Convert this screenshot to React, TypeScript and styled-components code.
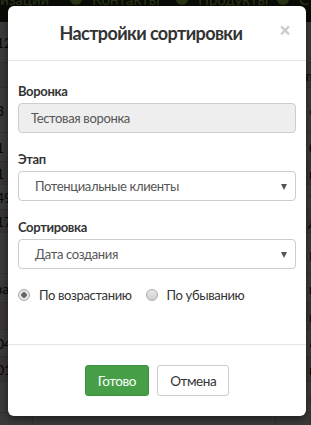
import React from "react";
import styled, { createGlobalStyle } from "styled-components";

const Global = createGlobalStyle`
  html, body { margin: 0; padding: 0; }
  body {
    width: 311px;
    height: 425px;
    overflow: hidden;
    font-family: Lato, "Open Sans", "Liberation Sans", sans-serif;
    background: #f0f0f0;
  }
`;

const Page = styled.div`
  position: relative;
  width: 311px;
  height: 425px;
  overflow: hidden;
  background: #f2f2f2;
`;

const TopNav = styled.div`
  height: 22px;
  background: #2a3320;
  display: flex;
  align-items: flex-start;
  white-space: nowrap;
  overflow: hidden;
`;

const NavItem = styled.div<{ $w: number }>`
  flex: 0 0 ${(p) => p.$w}px;
  display: flex;
  align-items: center;
  gap: 10px;
  margin-top: -10px;
  font-size: 15px;
  line-height: 18px;
  color: #a8dc5e;
`;

const NavDot = styled.span`
  width: 12px;
  height: 12px;
  border-radius: 50%;
  background: #a8dc5e;
`;

const Table = styled.div`
  display: flex;
  flex-direction: column;
`;

const Row = styled.div<{ $h: number; $tone?: "pink" | "grey" }>`
  height: ${(p) => p.$h}px;
  display: flex;
  align-items: center;
  justify-content: space-between;
  border-bottom: 1px solid #cfcfcf;
  background: ${(p) => (p.$tone === "pink" ? "#f2dede" : p.$tone === "grey" ? "#e4e4e4" : "#f4f4f4")};
  font-size: 14px;
  color: #222;
  white-space: nowrap;
`;

const CellLeft = styled.span`
  margin-left: -4px;
`;

const CellRight = styled.span`
  margin-right: -6px;
`;

const BottomStrip = styled.div`
  flex: 1;
  display: grid;
  grid-template-columns: 33px 1fr 35px;
  min-height: 40px;
`;

const StripCell = styled.div`
  border-right: 1px solid #cfcfcf;
  background: #f4f4f4;
`;

const Overlay = styled.div`
  position: absolute;
  inset: 0;
  background: rgba(0, 0, 0, 0.76);
`;

const Modal = styled.div`
  position: absolute;
  left: 8px;
  top: 6px;
  width: 298px;
  height: 410px;
  box-sizing: border-box;
  background: #fff;
  border-radius: 6px;
  box-shadow: 0 3px 9px rgba(0, 0, 0, 0.5);
  display: flex;
  flex-direction: column;
  font-family: Lato, "Open Sans", "Liberation Sans", sans-serif;
  letter-spacing: -0.35px;
`;

const Header = styled.div`
  display: flex;
  align-items: flex-start;
  padding: 15px;
  border-bottom: 1px solid #e5e5e5;
`;

const Title = styled.h4`
  flex: 1;
  margin: 0;
  text-align: center;
  font-size: 18px;
  font-weight: 700;
  line-height: 24px;
  letter-spacing: -0.6px;
  color: #333;
`;

const Close = styled.button`
  margin-top: -1px;
  padding: 0;
  border: 0;
  background: transparent;
  font-family: "Open Sans", "Liberation Sans", sans-serif;
  font-size: 21px;
  font-weight: 700;
  line-height: 1;
  color: #000;
  opacity: 0.2;
`;

const Body = styled.div`
  flex: 1;
  padding: 21px 10px 0;
`;

const Group = styled.div`
  margin-bottom: 17px;
`;

const Label = styled.div`
  font-size: 13px;
  font-weight: 700;
  line-height: 18px;
  margin-bottom: 3px;
  color: #333;
`;

const Field = styled.div<{ $disabled?: boolean; $pad: number }>`
  position: relative;
  height: 30px;
  box-sizing: border-box;
  display: flex;
  align-items: center;
  padding: 0 24px 0 ${(p) => p.$pad}px;
  border: 1px solid #ccc;
  border-radius: 4px;
  background: ${(p) => (p.$disabled ? "#eee" : "#fff")};
  font-size: 13px;
  color: #555;
`;

const Arrow = styled.span`
  position: absolute;
  right: 8px;
  top: 12px;
  width: 0;
  height: 0;
  border-left: 3.5px solid transparent;
  border-right: 3.5px solid transparent;
  border-top: 6px solid #555;
`;

const Radios = styled.div`
  display: flex;
  align-items: center;
  gap: 14px;
  margin-top: 5px;
  font-size: 13px;
  line-height: 18px;
  color: #333;
`;

const RadioLabel = styled.label`
  display: flex;
  align-items: center;
  gap: 9px;
`;

const RadioCircle = styled.span<{ $checked?: boolean }>`
  width: 12px;
  height: 12px;
  box-sizing: border-box;
  border-radius: 50%;
  border: 1px solid #aaa;
  background: ${(p) =>
    p.$checked
      ? "radial-gradient(circle, #666 0 2.5px, #e6e6e6 3px)"
      : "linear-gradient(#e8e8e8, #cfcfcf)"};
`;

const Footer = styled.div`
  border-top: 1px solid #e5e5e5;
  padding: 20px 15px;
  display: flex;
  justify-content: center;
  gap: 8px;
`;

const Button = styled.button<{ $primary?: boolean }>`
  height: 31px;
  padding: 0 12px;
  border-radius: 3px;
  font-family: Lato, "Open Sans", "Liberation Sans", sans-serif;
  font-size: 13.5px;
  letter-spacing: -0.4px;
  border: 1px solid ${(p) => (p.$primary ? "#3f8f40" : "#ccc")};
  background: ${(p) => (p.$primary ? "#469f47" : "#fff")};
  color: ${(p) => (p.$primary ? "#fff" : "#333")};
`;

const rows: { h: number; l: string; r: string; tone?: "pink" | "grey" }[] = [
  { h: 40, l: "12", r: "" },
  { h: 24, l: "", r: "m", tone: "grey" },
  { h: 44, l: "3 –", r: "e" },
  { h: 28, l: "1", r: "б" },
  { h: 22, l: "1", r: "н", tone: "pink" },
  { h: 24, l: "49", r: "т" },
  { h: 22, l: "17", r: "д", tone: "pink" },
  { h: 40, l: "", r: "р" },
  { h: 28, l: "за", r: "п" },
  { h: 26, l: "", r: "н", tone: "pink" },
  { h: 26, l: "04", r: "е" },
  { h: 24, l: "01", r: "н", tone: "pink" },
  { h: 30, l: "", r: "к" },
];

export default function App() {
  return (
    <>
      <Global />
      <Page>
        <TopNav>
          <NavItem $w={70}>изации</NavItem>
          <NavItem $w={106}>
            <NavDot />
            Контакты
          </NavItem>
          <NavItem $w={101}>
            <NavDot />
            Продукты
          </NavItem>
          <NavItem $w={40}>
            <NavDot />С
          </NavItem>
        </TopNav>
        <Table>
          {rows.map((r, i) => (
            <Row key={i} $h={r.h} $tone={r.tone}>
              <CellLeft>{r.l}</CellLeft>
              <CellRight>{r.r}</CellRight>
            </Row>
          ))}
        </Table>
        <BottomStrip>
          <StripCell />
          <StripCell />
          <StripCell />
        </BottomStrip>
        <Overlay />
        <Modal>
          <Header>
            <Title>Настройки сортировки</Title>
            <Close aria-label="Закрыть">×</Close>
          </Header>
          <Body>
            <Group>
              <Label>Воронка</Label>
              <Field $disabled $pad={12}>Тестовая воронка</Field>
            </Group>
            <Group>
              <Label>Этап</Label>
              <Field $pad={16}>
                Потенциальные клиенты
                <Arrow />
              </Field>
            </Group>
            <Group>
              <Label>Сортировка</Label>
              <Field $pad={16}>
                Дата создания
                <Arrow />
              </Field>
            </Group>
            <Radios>
              <RadioLabel>
                <RadioCircle $checked />
                По возрастанию
              </RadioLabel>
              <RadioLabel>
                <RadioCircle />
                По убыванию
              </RadioLabel>
            </Radios>
          </Body>
          <Footer>
            <Button $primary>Готово</Button>
            <Button>Отмена</Button>
          </Footer>
        </Modal>
      </Page>
    </>
  );
}
